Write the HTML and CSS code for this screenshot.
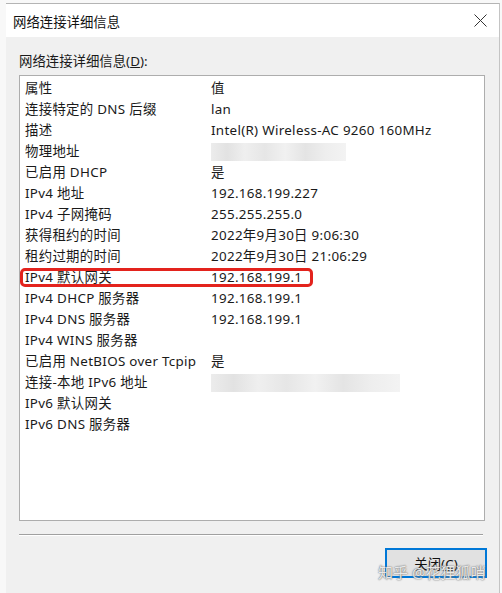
FILE: index.html
```html
<!DOCTYPE html>
<html lang="zh-CN">
<head>
    <meta charset="UTF-8">
    <title>网络连接详细信息</title>
    <link rel="stylesheet" href="styles.css">
</head>
<body>
    <div class="window">
        <div class="titlebar">
            <span class="title">网络连接详细信息</span>
            <svg class="close" width="13" height="13" viewBox="0 0 13 13">
                <path d="M0.5 0.5 L12.5 12.5 M12.5 0.5 L0.5 12.5" stroke="#333" stroke-width="1" fill="none"/>
            </svg>
        </div>
        <div class="content">
            <div class="label">网络连接详细信息(<u>D</u>):</div>
            <div class="list">
                <div class="row"><span class="prop">属性</span><span class="val">值</span></div>
                <div class="row"><span class="prop">连接特定的 DNS 后缀</span><span class="val">lan</span></div>
                <div class="row"><span class="prop">描述</span><span class="val">Intel(R) Wireless-AC 9260 160MHz</span></div>
                <div class="row"><span class="prop">物理地址</span><span class="val"><span class="blur mac"></span></span></div>
                <div class="row"><span class="prop">已启用 DHCP</span><span class="val">是</span></div>
                <div class="row"><span class="prop">IPv4 地址</span><span class="val">192.168.199.227</span></div>
                <div class="row"><span class="prop">IPv4 子网掩码</span><span class="val">255.255.255.0</span></div>
                <div class="row"><span class="prop">获得租约的时间</span><span class="val">2022年9月30日 9:06:30</span></div>
                <div class="row"><span class="prop">租约过期的时间</span><span class="val">2022年9月30日 21:06:29</span></div>
                <div class="row highlight"><span class="prop">IPv4 默认网关</span><span class="val">192.168.199.1</span></div>
                <div class="row"><span class="prop">IPv4 DHCP 服务器</span><span class="val">192.168.199.1</span></div>
                <div class="row"><span class="prop">IPv4 DNS 服务器</span><span class="val">192.168.199.1</span></div>
                <div class="row"><span class="prop">IPv4 WINS 服务器</span><span class="val"></span></div>
                <div class="row"><span class="prop">已启用 NetBIOS over Tcpip</span><span class="val">是</span></div>
                <div class="row"><span class="prop">连接-本地 IPv6 地址</span><span class="val"><span class="blur ipv6"></span></span></div>
                <div class="row"><span class="prop">IPv6 默认网关</span><span class="val"></span></div>
                <div class="row"><span class="prop">IPv6 DNS 服务器</span><span class="val"></span></div>
            </div>
            <div class="separator"></div>
            <div class="actions">
                <button class="btn">关闭(<u>C</u>)</button>
            </div>
        </div>
        <div class="watermark">知乎 @花狸狐哨</div>
    </div>
</body>
</html>
```

FILE: styles.css
```css
body {
    margin: 0;
    background-color: #f8f8f8;
    font-family: "Noto Sans", "Noto Sans CJK SC", sans-serif;
    font-size: 13.4px;
    color: #1a1a1a;
}

.window {
    position: relative;
    margin: 3px 2px 0 6px;
    height: 590px;
    background-color: #f0f0f0;
    border-top: 1px solid #b4b4b4;
    border-right: 1px solid #c4c4c4;
}

.titlebar {
    height: 33px;
    background-color: #fff;
    display: flex;
    align-items: center;
    justify-content: space-between;
    padding: 0 12px 0 7px;
}

.title {
    color: #111;
}

.content {
    padding: 14px 14px 0 13px;
}

.label {
    line-height: 21px;
}

.list {
    margin-top: 3px;
    height: 442px;
    background-color: #fff;
    border: 1px solid #adadad;
    padding-top: 2px;
}

.row {
    display: flex;
    height: 21px;
    line-height: 21px;
    position: relative;
    letter-spacing: 0.3px;
}

.prop {
    width: 186px;
    padding-left: 5px;
    white-space: nowrap;
}

.val {
    white-space: nowrap;
    display: flex;
    align-items: center;
}

.highlight::after {
    content: "";
    position: absolute;
    left: 0;
    top: 1px;
    width: 293px;
    height: 19px;
    border: 3px solid #e3231d;
    border-radius: 5px;
    box-sizing: border-box;
}

.blur {
    display: block;
    height: 18px;
    background: linear-gradient(90deg, #ececec 0%, #e2e2e2 12%, #efefef 25%, #e6e6e6 40%, #f1f1f1 55%, #e4e4e4 70%, #eeeeee 85%, #f3f3f3 100%);
}

.mac {
    width: 135px;
}

.ipv6 {
    width: 189px;
}

.separator {
    margin-top: 13px;
    height: 1px;
    background-color: #a0a0a0;
    border-bottom: 1px solid #fff;
    margin-right: 2px;
}

.actions {
    display: flex;
    justify-content: flex-end;
    padding-top: 12px;
}

.btn {
    width: 102px;
    height: 30px;
    font-family: inherit;
    font-size: 13.4px;
    color: #111;
    background-color: #e1e1e1;
    border: 2px solid #0078d7;
    padding: 0;
    margin-right: -2px;
}

.watermark {
    position: absolute;
    left: 372px;
    top: 557px;
    font-size: 15px;
    color: rgba(255, 255, 255, 0.85);
    text-shadow: 0 0 1px #666, 0 0 2px #888;
    white-space: nowrap;
}
```
